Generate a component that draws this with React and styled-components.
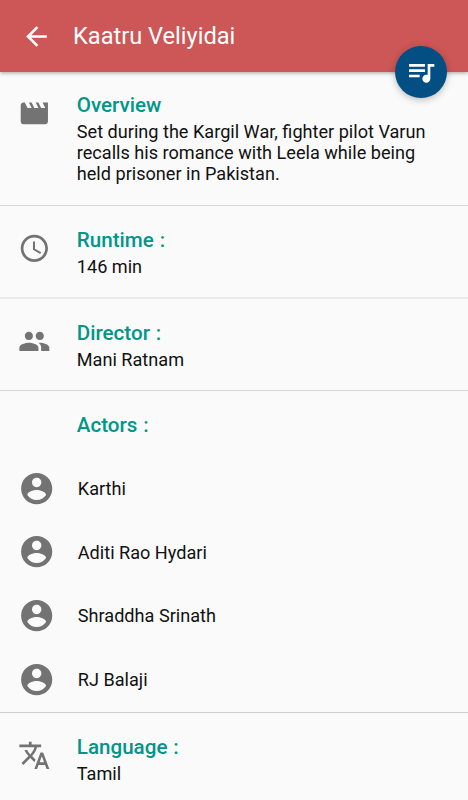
import React from 'react';
import styled, { createGlobalStyle } from 'styled-components'

const GlobalStyle = createGlobalStyle`
  body {
    margin: 0;
    background-color: #fafafa;
    font-family: Roboto, sans-serif;
    overflow: hidden;
  }
`

const Screen = styled.div`
  width: 468px;
  height: 800px;
  overflow: hidden;
  background-color: #fafafa;
`

const Toolbar = styled.header`
  position: relative;
  display: flex;
  align-items: center;
  box-sizing: border-box;
  height: 72px;
  padding-left: 21px;
  background-color: #cd5656;
  box-shadow: 0 1px 4px rgba(0, 0, 0, 0.35);
`

const Title = styled.h1`
  margin: -1px 0 0 21px;
  color: #fff;
  font-size: 23.6px;
  font-weight: 400;
  line-height: 28px;
`

const FloatingButton = styled.button`
  position: absolute;
  right: 21px;
  bottom: -26px;
  display: flex;
  align-items: center;
  justify-content: center;
  width: 52px;
  height: 52px;
  padding: 0;
  border: none;
  border-radius: 50%;
  background-color: #034f84;
  box-shadow: 0 2px 7px rgba(0, 0, 0, 0.25);
`

const Section = styled.section`
  display: flex;
  box-sizing: border-box;
  height: ${props => props.$height}px;
  padding: ${props => props.$top || 22}px 18px 0;
  border-bottom: ${props => props.$softLine ? '2px solid #e9e9e9' : '1px solid #d6d6d6'};
`

const IconColumn = styled.div`
  flex: none;
  width: 58.8px;
  padding-top: 4px;
`

const Heading = styled.h2`
  margin: 0 0 3.6px;
  color: #009688;
  font-size: 20.6px;
  font-weight: 500;
  line-height: 24px;
  word-spacing: 0.8px;
`

const Description = styled.p`
  width: 370px;
  margin: 0;
  color: #111;
  font-size: 18.13px;
  line-height: 21.3px;
`

const ActorsSection = styled.section`
  box-sizing: border-box;
  height: 322px;
  padding: 22px 17.8px 0;
  border-bottom: 1px solid #d0d0d0;
`

const ActorsTitle = styled(Heading)`
  margin: 0 0 19.5px 59px;
`

const Actor = styled.div`
  display: flex;
  align-items: center;
  gap: 22.6px;
  height: 63.7px;
  color: #111;
  font-size: 18.13px;
`

const Svg = styled.svg`
  display: block;
  flex: none;
  width: ${props => props.$size}px;
  height: ${props => props.$size}px;
  fill: ${props => props.$color || '#737373'};
`

const paths = {
    back: 'M20 11H7.83l5.59-5.59L12 4l-8 8 8 8 1.41-1.41L7.83 13H20v-2z',
    queue: 'M15 6H3v2h12V6zm0 4H3v2h12v-2zM3 16h8v-2H3v2zM17 6v8.18c-.31-.11-.65-.18-1-.18-1.66 0-3 1.34-3 3s1.34 3 3 3 3-1.34 3-3V8h3V6h-5z',
    movie: 'M18 4l2 4h-3l-2-4h-2l2 4h-3l-2-4H8l2 4H7L5 4H4c-1.1 0-1.99.9-1.99 2L2 18c0 1.1.9 2 2 2h16c1.1 0 2-.9 2-2V4h-4z',
    clock: 'M11.99 2C6.47 2 2 6.48 2 12s4.47 10 9.99 10C17.52 22 22 17.52 22 12S17.52 2 11.99 2zM12 20c-4.42 0-8-3.58-8-8s3.58-8 8-8 8 3.58 8 8-3.58 8-8 8zm.5-13H11v6l5.25 3.15.75-1.23-4.5-2.67z',
    people: 'M16 11c1.66 0 2.99-1.34 2.99-3S17.66 5 16 5c-1.66 0-3 1.34-3 3s1.34 3 3 3zm-8 0c1.66 0 2.99-1.34 2.99-3S9.66 5 8 5C6.34 5 5 6.34 5 8s1.34 3 3 3zm0 2c-2.33 0-7 1.17-7 3.5V19h14v-2.5c0-2.33-4.67-3.5-7-3.5zm8 0c-.29 0-.62.02-.97.05 1.16.84 1.97 1.97 1.97 3.45V19h6v-2.5c0-2.33-4.67-3.5-7-3.5z',
    account: 'M12 2C6.48 2 2 6.48 2 12s4.48 10 10 10 10-4.48 10-10S17.52 2 12 2zm0 3c1.66 0 3 1.34 3 3s-1.34 3-3 3-3-1.34-3-3 1.34-3 3-3zm0 14.2c-2.5 0-4.71-1.28-6-3.22.03-1.99 4-3.08 6-3.08 1.99 0 5.97 1.09 6 3.08-1.29 1.94-3.5 3.22-6 3.22z',
    translate: 'M12.87 15.07l-2.54-2.51.03-.03c1.74-1.94 2.98-4.17 3.71-6.53H17V4h-7V2H8v2H1v1.99h11.17C11.5 7.92 10.44 9.75 9 11.35 8.07 10.32 7.3 9.19 6.69 8h-2c.73 1.63 1.73 3.17 2.98 4.56l-5.09 5.02L4 19l5-5 3.11 3.11.76-2.04zM18.5 10h-2L12 22h2l1.12-3h4.75L21 22h2l-4.5-12zm-2.62 7l1.62-4.33L19.12 17h-3.24z',
}

function Icon({ name, size = 32.7, color }) {
    return (
        <Svg viewBox="0 0 24 24" $size={size} $color={color}>
            <path d={paths[name]} />
        </Svg>
    )
}

function InfoSection({ icon, title, text, height, top, softLine }) {
    return (
        <Section $height={height} $top={top} $softLine={softLine}>
            <IconColumn>
                <Icon name={icon} />
            </IconColumn>
            <div>
                <Heading>{title}</Heading>
                <Description>{text}</Description>
            </div>
        </Section>
    )
}

const actors = ['Karthi', 'Aditi Rao Hydari', 'Shraddha Srinath', 'RJ Balaji']

export default function App() {
    return (
        <Screen>
            <GlobalStyle />
            <Toolbar>
                <Icon name="back" size={31} color="#fff" />
                <Title>Kaatru Veliyidai</Title>
                <FloatingButton type="button" aria-label="Play songs">
                    <Icon name="queue" size={32} color="#fff" />
                </FloatingButton>
            </Toolbar>
            <InfoSection
                icon="movie"
                title="Overview"
                text="Set during the Kargil War, fighter pilot Varun recalls his romance with Leela while being held prisoner in Pakistan."
                height={134}
                top={21}
            />
            <InfoSection icon="clock" title="Runtime :" text="146 min" height={93} softLine />
            <InfoSection icon="people" title="Director :" text="Mani Ratnam" height={92} />
            <ActorsSection>
                <ActorsTitle>Actors :</ActorsTitle>
                {actors.map(name => (
                    <Actor key={name}>
                        <Icon name="account" size={37.4} />
                        <span>{name}</span>
                    </Actor>
                ))}
            </ActorsSection>
            <InfoSection icon="translate" title="Language :" text="Tamil" height={92} />
        </Screen>
    )
}
